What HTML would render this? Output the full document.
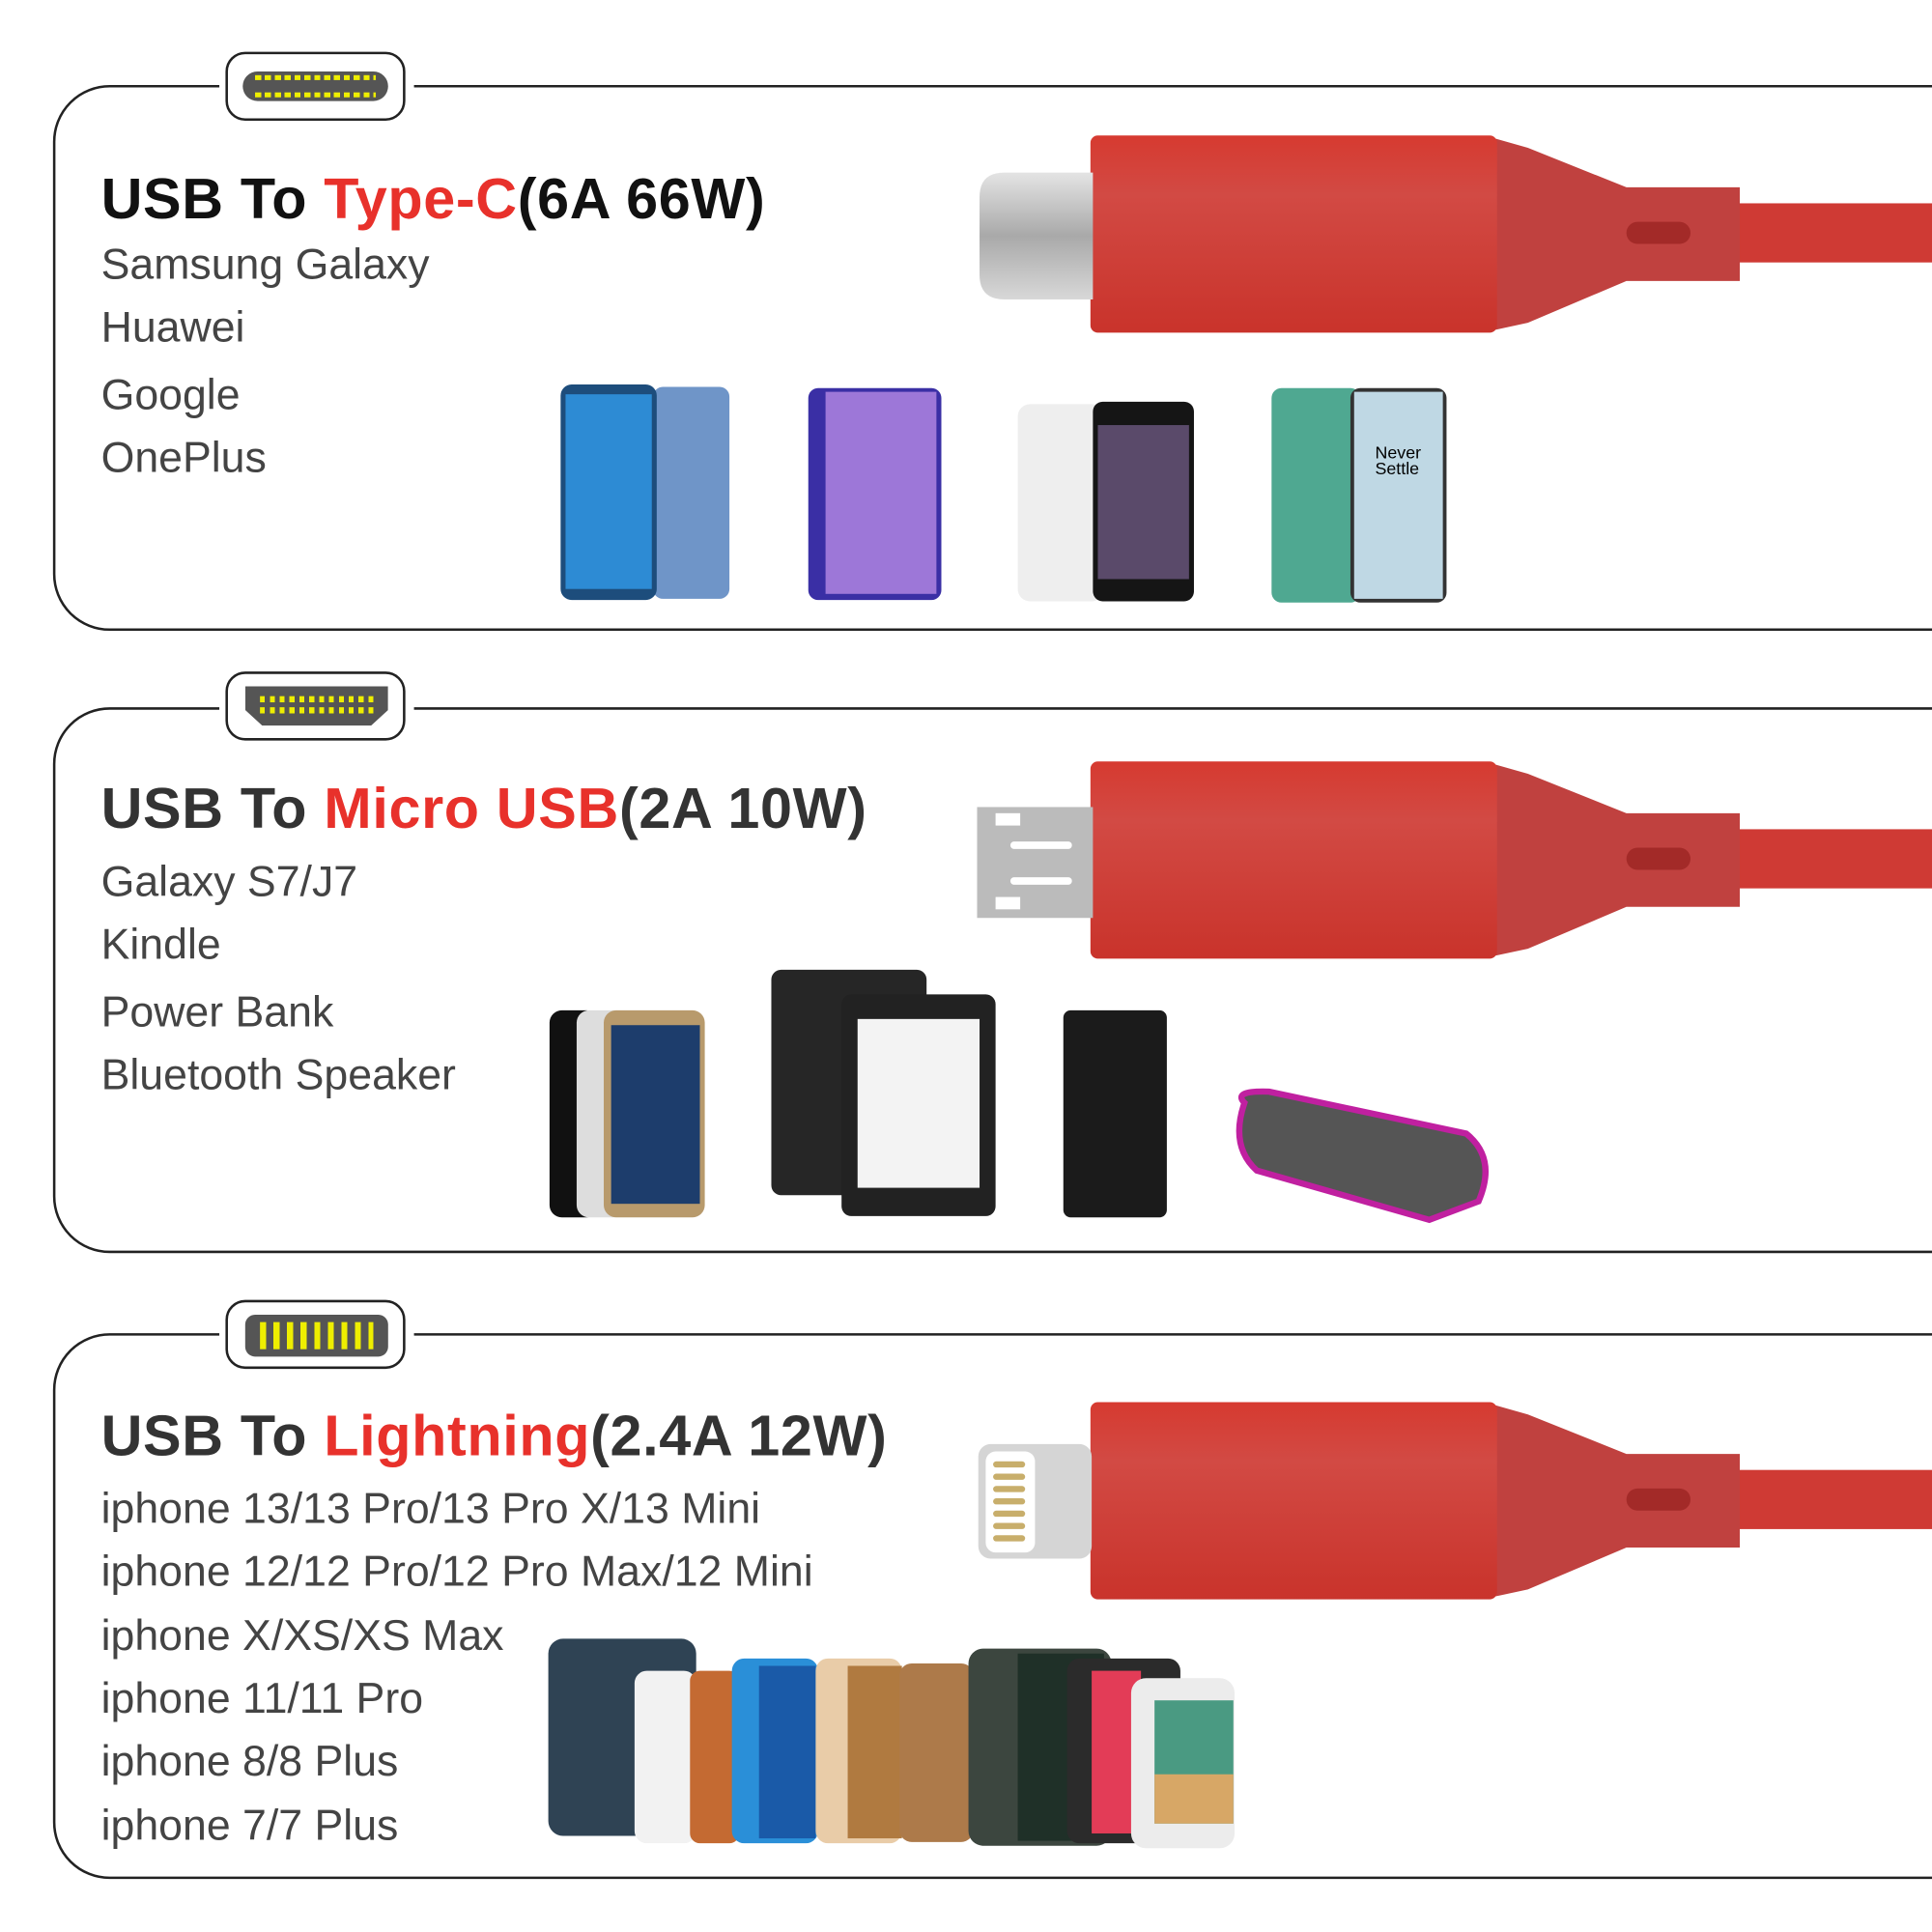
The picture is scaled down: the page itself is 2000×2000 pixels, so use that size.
<!DOCTYPE html>
<html><head><meta charset="utf-8"><style>
html,body{margin:0;padding:0;background:#fff;}
body{width:2000px;height:2000px;overflow:hidden;position:relative;}
#s{position:absolute;left:0;top:0;width:1568px;height:1568px;transform:scale(1.27551);transform-origin:0 0;font-family:"Liberation Sans",Arial,sans-serif;}
.panel{position:absolute;left:43px;width:1600px;height:443px;border:2.5px solid #222;border-radius:46px;box-sizing:border-box;}
.tab{position:absolute;left:183px;width:146px;height:56px;background:#fff;border:2px solid #222;border-radius:16px;box-sizing:border-box;}
.gap{position:absolute;left:178px;width:158px;height:8px;background:#fff;}
.title{position:absolute;left:82px;font-size:46.5px;font-weight:bold;color:#111;letter-spacing:0.5px;}
.title span{color:#e8312b;}
.it{position:absolute;left:82px;font-size:35px;color:#444;}
.abs{position:absolute;}
</style></head><body><div id="s">

<!-- panel 1 -->
<div class="panel" style="top:69px"></div>
<div class="gap" style="top:66px"></div>
<div class="tab" style="top:42px"><div class="abs" style="left:12px;top:14px;width:118px;height:24px;background:#555;border-radius:12px;">
<div class="abs" style="left:10px;top:3px;width:98px;height:4px;background:repeating-linear-gradient(90deg,#ee0 0 5px,transparent 5px 8px)"></div>
<div class="abs" style="left:10px;top:17px;width:98px;height:4px;background:repeating-linear-gradient(90deg,#ee0 0 5px,transparent 5px 8px)"></div></div></div>
<div class="title" style="top:134px">USB To <span>Type-C</span>(6A 66W)</div>
<div class="it" style="top:195px">Samsung Galaxy</div>
<div class="it" style="top:246px">Huawei</div>
<div class="it" style="top:301px">Google</div>
<div class="it" style="top:352px">OnePlus</div>

<!-- panel 2 -->
<div class="panel" style="top:574px"></div>
<div class="gap" style="top:571px"></div>
<div class="tab" style="top:545px"><div class="abs" style="left:14px;top:10px;width:116px;height:32px;background:#555;clip-path:polygon(0 0,100% 0,100% 60%,88% 100%,12% 100%,0 60%);">
<div class="abs" style="left:12px;top:8px;width:92px;height:5px;background:repeating-linear-gradient(90deg,#ee0 0 4px,transparent 4px 8px)"></div>
<div class="abs" style="left:12px;top:17px;width:92px;height:5px;background:repeating-linear-gradient(90deg,#ee0 0 4px,transparent 4px 8px)"></div></div></div>
<div class="title" style="top:629px;color:#333">USB To <span>Micro USB</span>(2A 10W)</div>
<div class="it" style="top:696px">Galaxy S7/J7</div>
<div class="it" style="top:747px">Kindle</div>
<div class="it" style="top:802px">Power Bank</div>
<div class="it" style="top:853px">Bluetooth Speaker</div>

<!-- panel 3 -->
<div class="panel" style="top:1082px"></div>
<div class="gap" style="top:1079px"></div>
<div class="tab" style="top:1055px"><div class="abs" style="left:14px;top:10px;width:116px;height:34px;background:#555;border-radius:8px;">
<div class="abs" style="left:12px;top:6px;width:92px;height:22px;background:repeating-linear-gradient(90deg,#ee0 0 5px,transparent 5px 11px)"></div></div></div>
<div class="title" style="top:1138px;color:#333">USB To <span>Lightning</span>(2.4A 12W)</div>
<div class="it" style="top:1205px">iphone 13/13 Pro/13 Pro X/13 Mini</div>
<div class="it" style="top:1256px">iphone 12/12 Pro/12 Pro Max/12 Mini</div>
<div class="it" style="top:1308px">iphone X/XS/XS Max</div>
<div class="it" style="top:1359px">iphone 11/11 Pro</div>
<div class="it" style="top:1410px">iphone 8/8 Plus</div>
<div class="it" style="top:1462px">iphone 7/7 Plus</div>

<svg class="abs" style="left:0;top:0" width="1568" height="1568">
<defs>
<linearGradient id="rb" x1="0" y1="0" x2="0" y2="1"><stop offset="0" stop-color="#d63a30"/><stop offset="0.3" stop-color="#d24a44"/><stop offset="1" stop-color="#c9332b"/></linearGradient>
<linearGradient id="mt" x1="0" y1="0" x2="0" y2="1"><stop offset="0" stop-color="#e4e4e4"/><stop offset="0.5" stop-color="#a9a9a9"/><stop offset="1" stop-color="#d8d8d8"/></linearGradient>
<g id="cab">
<rect x="1405" y="165" width="170" height="48" fill="#cf3a34"/>
<path d="M1212 112 L1240 120 L1320 152 L1412 152 L1412 228 L1320 228 L1240 262 L1212 268 Z" fill="#c0413f"/>
<rect x="885" y="110" width="330" height="160" rx="6" fill="url(#rb)"/>
<rect x="1320" y="180" width="52" height="18" rx="9" fill="#a32a28"/>
</g>
</defs>
<use href="#cab"/>
<path d="M887 140 L815 140 Q795 140 795 160 L795 223 Q795 243 815 243 L887 243 Z" fill="url(#mt)"/>
<use href="#cab" y="508"/>
<rect x="793" y="655" width="94" height="90" fill="#bbb"/>
<rect x="808" y="660" width="20" height="10" fill="#fff"/><rect x="808" y="728" width="20" height="10" fill="#fff"/>
<rect x="820" y="683" width="50" height="6" rx="3" fill="#fff"/><rect x="820" y="712" width="50" height="6" rx="3" fill="#fff"/>
<use href="#cab" y="1028"/>
<rect x="794" y="1172" width="92" height="93" rx="10" fill="#d5d5d5"/>
<rect x="800" y="1178" width="40" height="82" rx="8" fill="#fff"/>
<g fill="#c8ae6b"><rect x="806" y="1186" width="26" height="5" rx="2.5"/><rect x="806" y="1196" width="26" height="5" rx="2.5"/><rect x="806" y="1206" width="26" height="5" rx="2.5"/><rect x="806" y="1216" width="26" height="5" rx="2.5"/><rect x="806" y="1226" width="26" height="5" rx="2.5"/><rect x="806" y="1236" width="26" height="5" rx="2.5"/><rect x="806" y="1246" width="26" height="5" rx="2.5"/></g>

<!-- phones panel 1 -->
<rect x="530" y="314" width="62" height="172" rx="8" fill="#6f95c8"/>
<rect x="455" y="312" width="78" height="175" rx="9" fill="#1d4d7c"/><rect x="459" y="320" width="70" height="158" fill="#2d8bd4"/>
<rect x="656" y="315" width="108" height="172" rx="8" fill="#3a2fa5"/><rect x="670" y="318" width="90" height="164" fill="#9d77d8"/>
<rect x="826" y="328" width="70" height="160" rx="10" fill="#eee"/>
<rect x="887" y="326" width="82" height="162" rx="8" fill="#151515"/><rect x="891" y="345" width="74" height="125" fill="#5a4a6a"/>
<rect x="1032" y="315" width="72" height="174" rx="8" fill="#4fa891"/>
<rect x="1096" y="315" width="78" height="174" rx="8" fill="#333"/><rect x="1099" y="318" width="72" height="168" fill="#bfd8e4"/>
<text x="1116" y="372" font-size="14" font-family="Liberation Sans">Never</text><text x="1116" y="385" font-size="14" font-family="Liberation Sans">Settle</text>

<!-- panel 2 devices -->
<rect x="446" y="820" width="40" height="168" rx="10" fill="#111"/>
<rect x="468" y="820" width="40" height="168" rx="10" fill="#ddd"/>
<rect x="490" y="820" width="82" height="168" rx="10" fill="#b89a6c"/><rect x="496" y="832" width="72" height="145" fill="#1d3d6c"/>
<rect x="626" y="787" width="126" height="183" rx="8" fill="#262626"/>
<rect x="683" y="807" width="125" height="180" rx="8" fill="#222"/><rect x="696" y="827" width="99" height="137" fill="#f3f3f3"/>
<rect x="863" y="820" width="84" height="168" rx="6" fill="#1b1b1b"/>
<path d="M1010 895 Q1000 885 1030 886 L1190 920 Q1215 940 1200 975 L1160 990 L1020 950 Q998 930 1010 895 Z" fill="#555" stroke="#c020a0" stroke-width="5"/>

<!-- panel 3 phones -->
<rect x="445" y="1330" width="120" height="160" rx="12" fill="#2f4354"/>
<rect x="515" y="1356" width="50" height="140" rx="10" fill="#f2f2f2"/>
<rect x="560" y="1356" width="40" height="140" rx="8" fill="#c46a32"/>
<rect x="594" y="1346" width="70" height="150" rx="10" fill="#2a8fd8"/><rect x="616" y="1352" width="46" height="140" fill="#1a5aa8"/>
<rect x="662" y="1346" width="70" height="150" rx="10" fill="#e9cca8"/><rect x="688" y="1352" width="44" height="140" fill="#b07a40"/>
<rect x="730" y="1350" width="60" height="145" rx="10" fill="#ad7a4a"/>
<rect x="786" y="1338" width="116" height="160" rx="12" fill="#3c463f"/><rect x="826" y="1342" width="70" height="152" fill="#1f3028"/>
<rect x="866" y="1346" width="92" height="150" rx="10" fill="#2b2b2b"/><rect x="886" y="1356" width="40" height="132" fill="#e33c57"/>
<rect x="918" y="1362" width="84" height="138" rx="12" fill="#ececec"/><rect x="937" y="1380" width="64" height="100" fill="#4a9a82"/><rect x="937" y="1440" width="64" height="40" fill="#d7a766"/>
</svg>
</div></body></html>
